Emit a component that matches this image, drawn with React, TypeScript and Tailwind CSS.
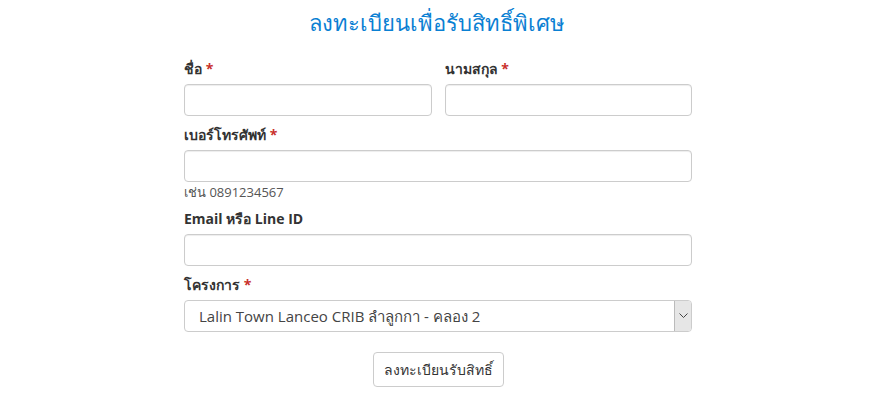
import React from 'react';

const Req = () => <span className="text-[#c9302c]"> *</span>;

const Label = ({ children }: { children: React.ReactNode }) => (
    <label className="block text-[14px] font-bold text-[#333] leading-[20px] mb-[5px]">{children}</label>
);

const Input = () => (
    <input
        type="text"
        className="block w-full h-[32px] rounded-[4px] border border-[#ccc] bg-white px-3 shadow-[inset_0_1px_1px_rgba(0,0,0,0.075)] outline-none"
    />
);

export default function App() {
    return (
        <div className="w-[869px] h-[409px] bg-white font-['Open_Sans','Noto_Sans',sans-serif] text-[#333]">
            <h1 className="pt-[6px] pl-[4px] text-center text-[22px] leading-[32px] text-[#0a80d3]">
                ลงทะเบียนเพื่อรับสิทธิ์พิเศษ
            </h1>

            <form className="ml-[184px] mt-[21px] w-[508px]" onSubmit={(e) => e.preventDefault()}>
                <div className="flex gap-[13px]">
                    <div className="flex-1">
                        <Label>ชื่อ<Req /></Label>
                        <Input />
                    </div>
                    <div className="flex-1">
                        <Label>นามสกุล<Req /></Label>
                        <Input />
                    </div>
                </div>

                <div className="mt-[9px]">
                    <Label>เบอร์โทรศัพท์<Req /></Label>
                    <Input />
                    <p className="mt-[1px] text-[13px] leading-[18px] text-[#555]">เช่น 0891234567</p>
                </div>

                <div className="mt-[8px]">
                    <Label>Email หรือ Line ID</Label>
                    <Input />
                </div>

                <div className="mt-[9px]">
                    <Label>โครงการ<Req /></Label>
                    <div className="flex h-[32px] rounded-[4px] border border-[#ccc] bg-white">
                        <span className="flex-1 pl-[14px] text-[15px] leading-[30px] text-[#444]">
                            Lalin Town Lanceo CRIB ลำลูกกา - คลอง 2
                        </span>
                        <span className="flex w-[17px] items-center justify-center rounded-r-[3px] border-l border-[#bbb] bg-[#e6e6e6]">
                            <svg width="9" height="6" viewBox="0 0 9 6" fill="none" stroke="#444" strokeWidth="1">
                                <path d="M0.5 0.5 L4.5 4.5 L8.5 0.5" />
                            </svg>
                        </span>
                    </div>
                </div>

                <div className="mt-[20px] flex justify-center">
                    <button
                        type="submit"
                        className="h-[35px] rounded-[4px] border border-[#ccc] bg-white px-[10px] text-[14px] text-[#333]"
                    >
                        ลงทะเบียนรับสิทธิ์
                    </button>
                </div>
            </form>
        </div>
    );
}
